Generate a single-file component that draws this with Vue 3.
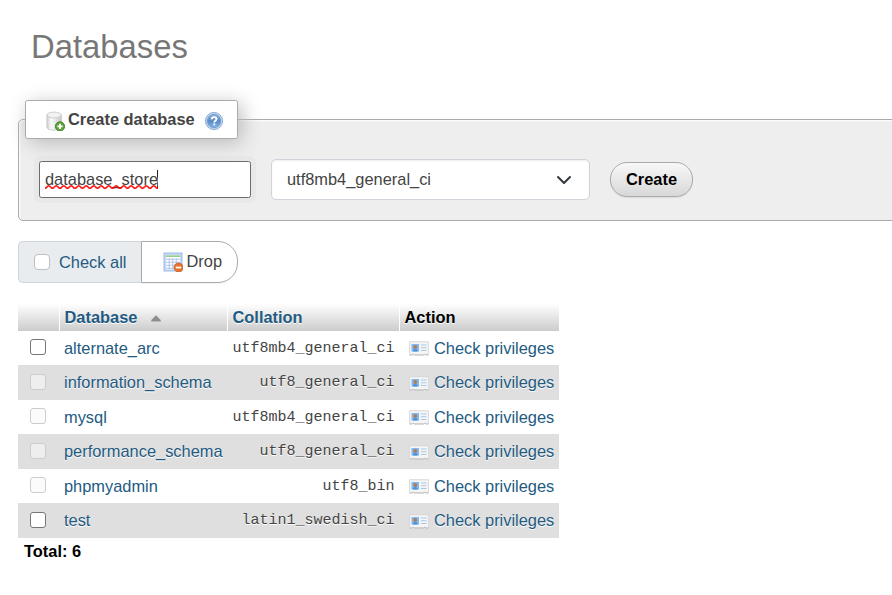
<script setup>
const rows = [
  { name: 'alternate_arc', collation: 'utf8mb4_general_ci', locked: false },
  { name: 'information_schema', collation: 'utf8_general_ci', locked: true },
  { name: 'mysql', collation: 'utf8mb4_general_ci', locked: true },
  { name: 'performance_schema', collation: 'utf8_general_ci', locked: true },
  { name: 'phpmyadmin', collation: 'utf8_bin', locked: true },
  { name: 'test', collation: 'latin1_swedish_ci', locked: false },
]
</script>

<template>
  <main class="page">
    <h2 class="title">Databases</h2>

    <section class="create">
      <div class="legend">
        <svg class="icon" viewBox="0 0 16 16">
          <defs>
            <linearGradient id="cyl" x1="0" x2="1" y1="0" y2="0">
              <stop offset="0" stop-color="#cdcdcd" /><stop offset=".3" stop-color="#fafafa" />
              <stop offset=".6" stop-color="#e6e6e6" /><stop offset="1" stop-color="#c6c6c6" />
            </linearGradient>
          </defs>
          <path d="M1.500 3.200v9.800c0 1.300 2.600 2.300 5.800 2.300s5.800-1 5.800-2.300V3.200z" fill="url(#cyl)" stroke="#c8c8c8" stroke-width=".7" />
          <ellipse cx="7.300" cy="3.200" rx="5.800" ry="2.300" fill="#f2f2f2" stroke="#c8c8c8" stroke-width=".7" />
          <circle cx="12" cy="12.300" r="3.700" fill="#5ea53c" stroke="#3f7f22" stroke-width=".7" />
          <path d="M12 10.200v4.200M9.900 12.300h4.200" stroke="#fff" stroke-width="1.500" />
        </svg>
        <span class="legend-text">Create database</span>
        <svg class="icon help" viewBox="0 0 16 16">
          <defs>
            <linearGradient id="ball" x1="0" x2="0" y1="0" y2="1">
              <stop offset="0" stop-color="#92b3dd" /><stop offset=".5" stop-color="#5b8ac6" /><stop offset="1" stop-color="#86bae8" />
            </linearGradient>
          </defs>
          <circle cx="8" cy="8" r="6.900" fill="#bcd3ee" stroke="#93b1d9" stroke-width=".8" />
          <circle cx="8" cy="8" r="5.300" fill="url(#ball)" stroke="#6a90c4" stroke-width=".6" />
          <path d="M6.200 6.500C6.200 4.300 10 4.400 10 6.400c0 1.300-1.800 1.400-1.800 2.700" fill="none" stroke="#fff" stroke-width="1.500" />
          <rect x="7.450" y="10" width="1.500" height="1.400" fill="#fff" />
        </svg>
      </div>
      <div class="form">
        <div class="name-field">
          <span class="typed">database_store<svg class="squiggle" viewBox="0 0 113 6">
            <defs>
              <pattern id="wave" width="7.500" height="6" patternUnits="userSpaceOnUse">
                <path d="M-3.750 1.700C-2 1.700-1.800 4.300 0 4.300S2 1.700 3.750 1.700S5.700 4.300 7.500 4.300S9.500 1.700 11.250 1.700" fill="none" stroke="#f00" stroke-width="1.400" />
              </pattern>
            </defs>
            <rect width="113" height="6" fill="url(#wave)" />
          </svg></span><span class="caret"></span>
        </div>
        <div class="select">
          <span>utf8mb4_general_ci</span>
          <svg class="chevron" viewBox="0 0 16 16"><path d="M2 5l6 6 6-6" fill="none" stroke="#343a40" stroke-width="2" stroke-linecap="round" stroke-linejoin="round" /></svg>
        </div>
        <button class="submit">Create</button>
      </div>
    </section>

    <div class="bulk">
      <div class="check-all"><span class="box soft"></span><span>Check all</span></div>
      <div class="drop">
        <svg class="icon" viewBox="0 0 16 16">
          <rect x=".9" y=".9" width="14.200" height="14.200" fill="#c5d9f6" stroke="#a3c0ea" stroke-width="1" />
          <rect x="2.400" y="2.500" width="11.200" height="11.500" fill="#fff" />
          <path d="M2.400 3.300h11.200" stroke="#8bc777" stroke-width="1.200" />
          <path d="M2.400 5.800h11.200M2.400 8.200h11.200M2.400 10.600h11.200M2.400 13h11.200M5 5v9M7.800 5v9M10.600 5v9" stroke="#a9c3e9" stroke-width=".75" />
          <circle cx="12.400" cy="12.400" r="3.600" fill="#e8742f" stroke="#c25a1e" stroke-width=".6" />
          <path d="M10.200 12.400h4.400" stroke="#fff" stroke-width="1.400" />
        </svg>
        <span>Drop</span>
      </div>
    </div>

    <div class="table">
      <div class="row head">
        <div class="cell"></div>
        <div class="cell link">Database<svg class="sort" viewBox="0 0 10 7"><path d="M5 .3L9.700 5v1.600H.3V5z" fill="#8f8f8f" /></svg></div>
        <div class="cell link">Collation</div>
        <div class="cell">Action</div>
      </div>
      <div v-for="row in rows" :key="row.name" class="row item">
        <div class="pick"><span class="box" :class="{ locked: row.locked }"></span></div>
        <div class="name link">{{ row.name }}</div>
        <div class="collation">{{ row.collation }}</div>
        <div class="action link">
          <svg class="icon card" viewBox="0 0 16 16">
            <path d="M.5 3h15v10.500h-2l-.8-.9-.8.900H4.100l-.8-.9-.8.900h-2z" fill="#f5f5f5" stroke="#d2d3d5" stroke-width=".7" />
            <path d="M.5 13.600h2.200l.7-.7.700.700h7.800l.7-.7.700.700h2.200" fill="none" stroke="#b8babc" stroke-width=".7" />
            <rect x="2" y="4.800" width="6" height="6" fill="#7fb8f2" />
            <path d="M3 10.800c0-2.800 4-2.800 4 0z" fill="#4b90da" />
            <circle cx="5" cy="7.200" r="1.600" fill="#ad7f58" />
            <path d="M9.500 5.600H14M9.500 7.800H14M9.500 10H14" stroke="#a9c8e8" stroke-width=".9" />
          </svg>
          <span>Check privileges</span>
        </div>
      </div>
    </div>
    <div class="total">Total: 6</div>
  </main>
</template>

<style>
body { background: #fff; overflow: hidden; }
</style>

<style scoped>
* { box-sizing: border-box; }
.page {
  width: 892px; height: 595px; overflow: hidden; padding-left: 18px;
  font-family: "Liberation Sans", Arial, sans-serif; font-size: 16.4px; line-height: 20px; color: #444;
}
.title { margin: 0; padding: 27px 0 0 13px; height: 119px; font-size: 32.8px; line-height: 40px; font-weight: 400; color: #777; }
.icon { width: 20px; height: 20px; flex: none; display: block; }
.link { color: #235a81; }
.create {
  width: 900px; height: 102px; border: 1px solid #aaa; border-radius: 5px 0 0 5px;
  background: #eee; box-shadow: inset 1px 1px 2px #fff; text-shadow: 1px 1px 2px #fff;
}
.legend {
  width: 213px; height: 39px; margin: -20px 0 0 6px; padding-left: 19px; display: flex; align-items: center;
  background: #fff; border: 1px solid #aaa; border-radius: 2.500px; box-shadow: 4px 4px 19px #bbb;
  font-weight: 700; position: relative;
}
.legend .icon { margin-top: 3px; }
.legend-text { margin-left: 3px; padding-bottom: 2px; white-space: nowrap; width: 136px; }
.form { display: flex; align-items: center; padding: 20px 0 0 20px; }
.name-field {
  width: 212px; height: 37px; display: flex; align-items: center; padding: 0 0 1px 5px;
  background: #fff; border: 1px solid #6b6b6b; border-radius: 2.500px; box-shadow: 0 0 0 5px #e8e8e8;
}
.typed { position: relative; }
.squiggle { position: absolute; left: 0; top: 15px; width: 113px; height: 6px; }
.caret { width: 1px; height: 19px; background: #222; margin-left: -1px; }
.select {
  width: 319px; height: 41px; margin-left: 20px; padding: 0 17px 0 15px; display: flex; align-items: center; justify-content: space-between;
  background: #fff; border: 1px solid #ced4da; border-radius: 5px; box-shadow: inset 0 1px 2px rgba(0, 0, 0, .07);
}
.select span { padding-bottom: 2px; }
.chevron { width: 16px; height: 16px; }
.submit {
  width: 83px; height: 35px; margin-left: 20px; padding: 0 0 2px; border: 1px solid #aaa; border-radius: 17px;
  background: linear-gradient(#f8f8f8, #d8d8d8); font: 700 16.4px/20px "Liberation Sans", Arial, sans-serif; color: #000;
  box-shadow: 0 1px 1px rgba(0, 0, 0, .08);
}
.bulk { display: flex; margin-top: 20px; height: 42px; }
.check-all {
  width: 123px; display: flex; align-items: center; padding-left: 15px; gap: 9px; color: #235a81;
  background: #e9ecef; border: 1px solid #ced4da; border-right: 0; border-radius: 5px 0 0 5px;
}
.drop {
  width: 97px; display: flex; align-items: center; gap: 4px; padding-left: 20.500px;
  border: 1px solid #aaa; border-radius: 0 20px 20px 0; box-shadow: 0 1px 1px rgba(0, 0, 0, .05);
}
.drop span { padding-bottom: 2px; }
.box { width: 16px; height: 16px; flex: none; background: #fff; border: 1.500px solid #767676; border-radius: 3px; }
.box.soft { border: 1px solid #bfbfbf; border-radius: 4px; }
.box.locked { border: 1px solid #cdcdcd; background: rgba(248, 248, 248, .6); }
.table { margin-top: 21px; width: 541px; text-shadow: 0 1px 0 #fff; }
.row { display: grid; grid-template-columns: 42px 168px 172px 159px; }
.head { height: 26.700px; font-weight: 700; }
.head .cell {
  display: flex; align-items: center; padding-left: 4.500px; color: #000;
  background: linear-gradient(#fff, #ccc); border-right: 1px solid #fff;
}
.head .cell.link { color: #235a81; }
.head .cell:last-child { border: 0; }
.sort { width: 10px; height: 7px; margin: 3px 0 0 14px; }
.item { height: 34.500px; align-items: center; }
.item:nth-child(odd) { background: #dfdfdf; }
.pick { padding: 0 0 1px 12px; }
.pick .box { display: block; }
.name { padding-left: 4px; }
.collation { font-family: "Liberation Mono", monospace; font-size: 15px; text-align: right; padding: 2px 5.500px 0 0; }
.action { display: flex; align-items: center; gap: 5px; padding-left: 9px; white-space: nowrap; }
.card { margin-top: 1px; }
.total { padding: 3px 0 0 6px; font-weight: 700; color: #000; }
</style>
